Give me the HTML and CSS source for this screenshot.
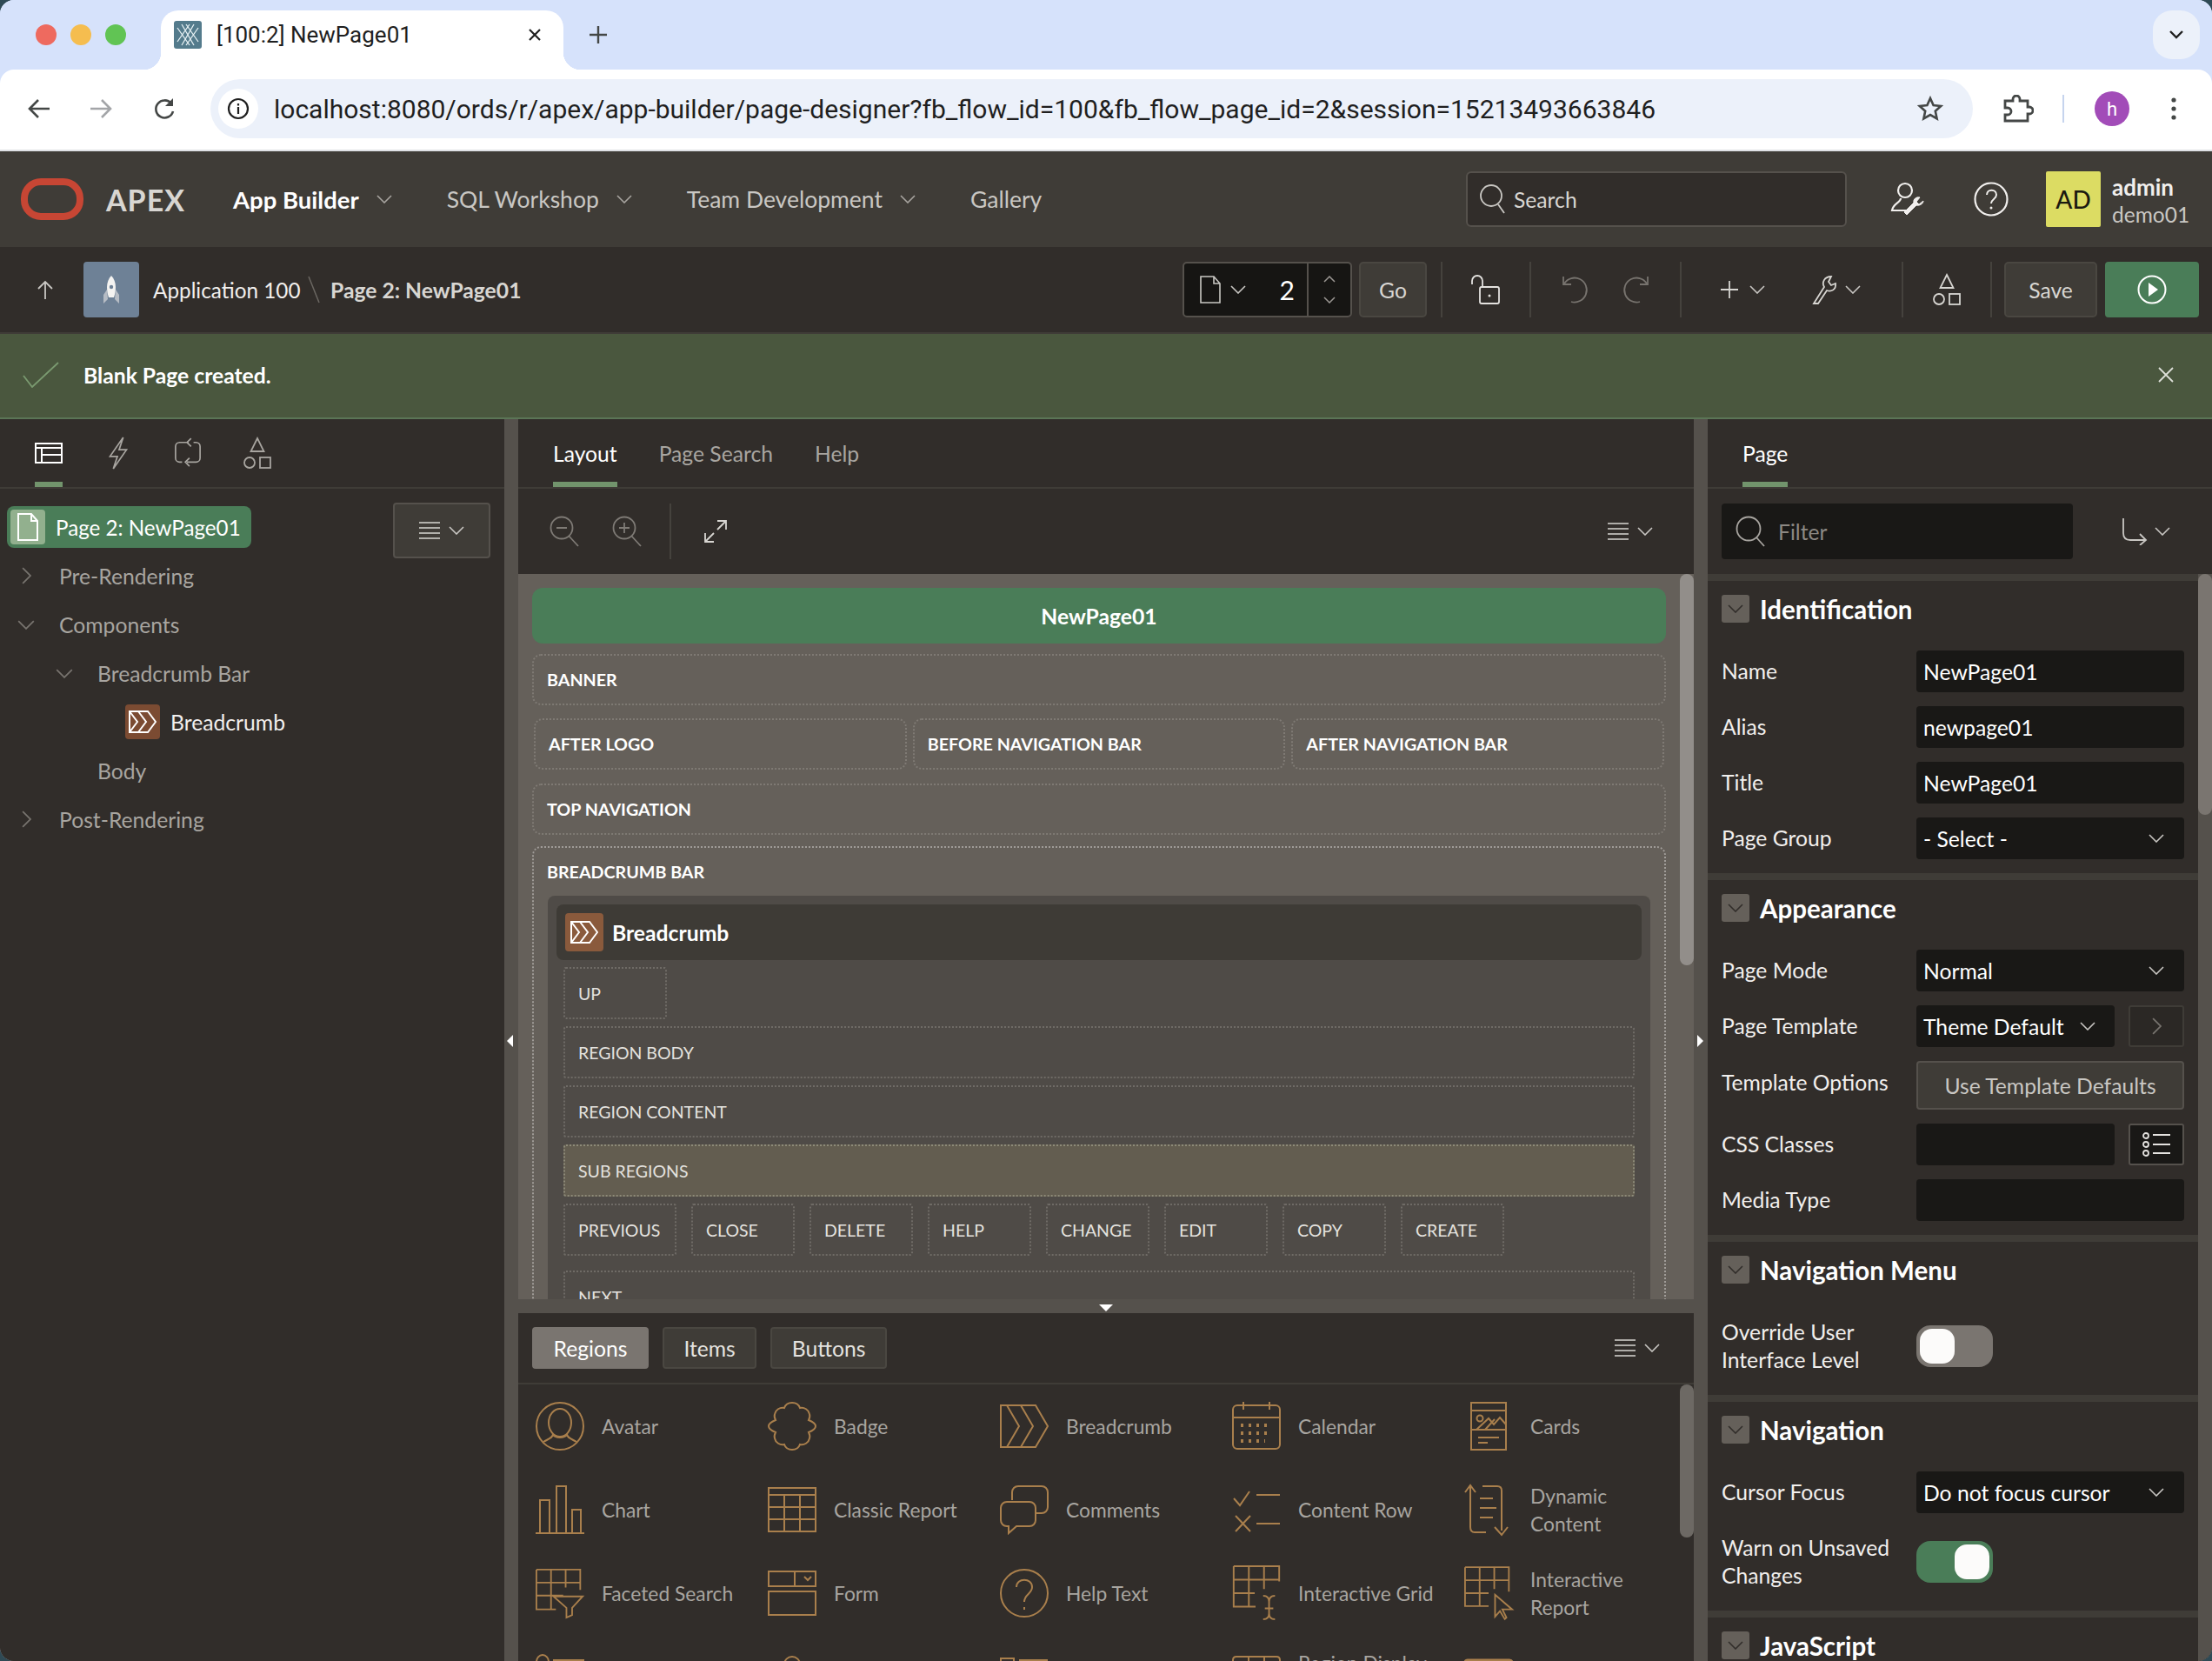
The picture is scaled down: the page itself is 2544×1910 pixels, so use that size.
FILE: index.html
```html
<!DOCTYPE html>
<html lang="en">
<head>
  <meta charset="UTF-8">
  <title>[100:2] NewPage01</title>
  <link rel="stylesheet" href="styles.css">
</head>
<body>
  <svg class="sprite" xmlns="http://www.w3.org/2000/svg">
    <symbol id="chev-down" viewBox="0 0 18 10"><path d="M1 1l8 8 8-8" fill="none" stroke="currentColor" stroke-width="1.6"/></symbol>
    <symbol id="chev-right" viewBox="0 0 10 18"><path d="M1 1l8 8-8 8" fill="none" stroke="currentColor" stroke-width="1.6"/></symbol>
    <symbol id="menu-lines" viewBox="0 0 24 20"><path d="M0 1h24M0 7h24M0 13h24M0 19h24" fill="none" stroke="currentColor" stroke-width="1.7"/></symbol>
    <symbol id="shapes" viewBox="0 0 32 38"><g fill="none" stroke="currentColor" stroke-width="1.8"><path d="M16 2l7.5 15h-15z"/><circle cx="7" cy="30" r="6"/><rect x="19" y="24" width="12" height="12"/></g></symbol>
    <symbol id="crumb-white" viewBox="0 0 32 28"><g fill="none" stroke="currentColor" stroke-width="2"><path d="M1 2h21l9 12-9 12H1z"/><path d="M1 2l9 12-9 12M11 2l9 12-9 12"/></g></symbol>
  </svg>

  <div class="window">
    <div class="tabstrip">
      <div class="lights"><i class="light red"></i><i class="light yellow"></i><i class="light green"></i></div>
      <div class="tab">
        <svg class="favicon" viewBox="0 0 32 32"><rect width="32" height="32" rx="3" fill="#547b8c"/><path d="M9 4l14 24M14 4l14 20M4 8l14 20M23 4L9 28M18 4L4 24M28 8L14 28" fill="none" stroke="#e6f0f3" stroke-width="1.3"/></svg>
        <span class="tab-title">[100:2] NewPage01</span>
        <svg class="tab-x" viewBox="0 0 14 14"><path d="M1 1l12 12M13 1L1 13" stroke="#1f1f1f" stroke-width="2.2"/></svg>
      </div>
      <svg class="tab-plus" viewBox="0 0 20 20"><path d="M10 0v20M0 10h20" stroke="#444746" stroke-width="2.4"/></svg>
      <div class="tab-search"><svg viewBox="0 0 16 10"><path d="M1 1l7 7 7-7" fill="none" stroke="#1f1f1f" stroke-width="2.4"/></svg></div>
    </div>

    <div class="browserbar">
      <svg class="nav-ico" viewBox="0 0 26 26"><path d="M25 13H3M12 3L2 13l10 10" fill="none" stroke="#444746" stroke-width="2.6"/></svg>
      <svg class="nav-ico forward" viewBox="0 0 26 26"><path d="M1 13h22M14 3l10 10-10 10" fill="none" stroke="#a3a5a8" stroke-width="2.6"/></svg>
      <svg class="nav-ico reload" viewBox="0 0 26 26"><path d="M21 7a10 10 0 1 0 2 9" fill="none" stroke="#444746" stroke-width="2.6"/><path d="M23 1v9h-9z" fill="#444746"/></svg>
      <div class="omnibox">
        <span class="site-info"><svg viewBox="0 0 26 26"><circle cx="13" cy="13" r="11" fill="none" stroke="#1f1f1f" stroke-width="2.2"/><path d="M13 11v8M13 7v2.4" stroke="#1f1f1f" stroke-width="2.2"/></svg></span>
        <span class="url">localhost:8080/ords/r/apex/app-builder/page-designer?fb_flow_id=100&amp;fb_flow_page_id=2&amp;session=15213493663846</span>
        <svg class="star" viewBox="0 0 30 30"><path d="M15 3l3.6 8 8.6 1-6.4 5.8 1.8 8.6L15 22l-7.6 4.4 1.8-8.6L2.800 12l8.600-1z" fill="none" stroke="#444746" stroke-width="2.6"/></svg>
      </div>
      <svg class="ext" viewBox="0 0 36 32"><path d="M3 7h9V5a4 4 0 0 1 8 0v2h9v7h2a4 4 0 0 1 0 8h-2v8H3v-7h3a4 4 0 0 0 0-8H3z" fill="none" stroke="#444746" stroke-width="2.8"/></svg>
      <i class="bar-sep"></i>
      <span class="profile">h</span>
      <svg class="kebab" viewBox="0 0 6 26"><circle cx="3" cy="3" r="2.600" fill="#444746"/><circle cx="3" cy="13" r="2.600" fill="#444746"/><circle cx="3" cy="23" r="2.600" fill="#444746"/></svg>
    </div>

    <header class="apex-head">
      <svg class="logo" viewBox="0 0 72 48"><rect x="4" y="4" width="64" height="40" rx="19" fill="none" stroke="#c74634" stroke-width="8"/></svg>
      <span class="apex-name">APEX</span>
      <nav class="topnav">
        <a class="topnav-item active">App Builder<svg><use href="#chev-down"/></svg></a>
        <a class="topnav-item">SQL Workshop<svg><use href="#chev-down"/></svg></a>
        <a class="topnav-item">Team Development<svg><use href="#chev-down"/></svg></a>
        <a class="topnav-item">Gallery</a>
      </nav>
      <div class="head-search">
        <svg viewBox="0 0 32 36"><circle cx="14" cy="14" r="12" fill="none" stroke="#c9c7c3" stroke-width="1.800"/><path d="M22 24l7 10" stroke="#c9c7c3" stroke-width="1.800"/></svg>
        <span>Search</span>
      </div>
      <svg class="head-ico" viewBox="0 0 40 40"><g fill="none" stroke="#f1efed" stroke-width="2.200"><circle cx="17" cy="10" r="8"/><path d="M12 19c0 5-9 6-10 14h19"/><path d="M38 22l-5 4-3-3 4-5c-4-1-8 2-7 6l-11 11 3 3 11-11c4 1 8-2 8-5z" fill="#f1efed" stroke-width="1"/></g></svg>
      <svg class="head-ico help" viewBox="0 0 40 40"><circle cx="20" cy="20" r="18.500" fill="none" stroke="#f1efed" stroke-width="2.200"/><path d="M15 15c0-7 11-7 11 0 0 5-6 5-6 10" fill="none" stroke="#f1efed" stroke-width="2"/><circle cx="20" cy="30" r="1.500" fill="#f1efed"/></svg>
      <div class="user-badge">AD</div>
      <div class="user-meta"><b>admin</b><span>demo01</span></div>
    </header>

    <div class="app-toolbar">
      <svg class="up-arrow" viewBox="0 0 20 22"><path d="M10 22V2M2 10l8-8 8 8" fill="none" stroke="#c9c7c3" stroke-width="1.800"/></svg>
      <span class="app-icon"><svg viewBox="0 0 24 34"><path d="M7 17l-4 6v10l5-5zM17 17l4 6v10l-5-5z" fill="#b6bcc4"/><path d="M12 1c3 3 5 8 5 13 0 5-1 9-2 12H9c-1-3-2-7-2-12 0-5 2-10 5-13z" fill="#f4f3f1"/><circle cx="12" cy="14" r="2.200" fill="#6e8196"/></svg></span>
      <span class="crumb-app">Application 100</span>
      <svg class="crumb-slash" viewBox="0 0 14 32"><path d="M1 1l12 30" stroke="#6b6762" stroke-width="1.500"/></svg>
      <span class="crumb-page">Page 2: NewPage01</span>

      <div class="page-picker">
        <div class="picker-main">
          <svg class="picker-doc" viewBox="0 0 24 32"><path d="M1 1h15l7 8v22H1zM16 1v8h7" fill="none" stroke="#c9c7c3" stroke-width="1.600"/></svg>
          <svg class="chev"><use href="#chev-down"/></svg>
          <span class="picker-num">2</span>
        </div>
        <div class="picker-spin">
          <svg viewBox="0 0 14 8"><path d="M1 7l6-6 6 6" fill="none" stroke="#9b9793" stroke-width="1.500"/></svg>
          <svg viewBox="0 0 14 8"><path d="M1 1l6 6 6-6" fill="none" stroke="#9b9793" stroke-width="1.500"/></svg>
        </div>
      </div>
      <div class="tool-btn go">Go</div>
      <i class="tool-sep first"></i>
      <svg class="tool-ico lock" viewBox="0 0 34 34"><path d="M2 11V7a6 6 0 0 1 12 0v7" fill="none" stroke="#e4e2df" stroke-width="1.800"/><rect x="11" y="14" width="22" height="19" rx="2" fill="none" stroke="#e4e2df" stroke-width="1.800"/><circle cx="22" cy="24" r="1.500" fill="#e4e2df"/></svg>
      <i class="tool-sep"></i>
      <svg class="tool-ico undo" viewBox="0 0 32 34"><path d="M4 10a14 14 0 1 1 8 21" fill="none" stroke="#77736e" stroke-width="1.800"/><path d="M3 2v9h9" fill="none" stroke="#77736e" stroke-width="1.800"/></svg>
      <svg class="tool-ico redo" viewBox="0 0 32 34"><path d="M28 10a14 14 0 1 0-8 21" fill="none" stroke="#77736e" stroke-width="1.800"/><path d="M29 2v9h-9" fill="none" stroke="#77736e" stroke-width="1.800"/></svg>
      <i class="tool-sep"></i>
      <svg class="tool-ico plus" viewBox="0 0 20 20"><path d="M10 0v20M0 10h20" stroke="#d8d6d2" stroke-width="1.800"/></svg>
      <svg class="chev"><use href="#chev-down"/></svg>
      <svg class="tool-ico wrench" viewBox="0 0 30 34"><path d="M3 33L15 14c-3-5 0-12 8-12l-3 6 3 4 5-2c1 7-5 10-10 8L8 33z" fill="none" stroke="#d8d6d2" stroke-width="1.800"/></svg>
      <svg class="chev"><use href="#chev-down"/></svg>
      <i class="tool-sep"></i>
      <svg class="tool-ico shapes-ico"><use href="#shapes"/></svg>
      <i class="tool-sep"></i>
      <div class="tool-btn save">Save</div>
      <div class="run-btn"><svg viewBox="0 0 34 34"><circle cx="17" cy="17" r="15.500" fill="none" stroke="#fff" stroke-width="2"/><path d="M13 9l11 8-11 8z" fill="#fff"/></svg></div>
    </div>

    <div class="success-bar">
      <svg class="success-check" viewBox="0 0 42 30"><path d="M1 16l10 13L41 1" fill="none" stroke="#7a9a70" stroke-width="1.800"/></svg>
      <b>Blank Page created.</b>
      <svg class="success-x" viewBox="0 0 18 18"><path d="M1 1l16 16M17 1L1 17" stroke="#dde0d8" stroke-width="1.800"/></svg>
    </div>

    <main class="designer">
      <section class="tree-panel">
        <div class="panel-tabs icons">
          <span class="icon-tab on"><svg viewBox="0 0 32 24"><rect x="1" y="1" width="30" height="22" fill="none" stroke="#fff" stroke-width="2"/><path d="M1 6h30M8 6v17M8 14h23" fill="none" stroke="#fff" stroke-width="2"/></svg></span>
          <span class="icon-tab"><svg viewBox="0 0 24 40"><path d="M18 1L2 24h9L6 39l16-23h-9z" fill="none" stroke="#a8a5a0" stroke-width="1.800"/></svg></span>
          <span class="icon-tab"><svg viewBox="0 0 34 40"><path d="M18 7H7a5 5 0 0 0-5 5v14a5 5 0 0 0 5 5h3M24 7h3a5 5 0 0 1 5 5v14a5 5 0 0 1-5 5H16M21 2l-5 5 5 5M19 26l-5 5 5 5" fill="none" stroke="#a8a5a0" stroke-width="1.800"/></svg></span>
          <span class="icon-tab"><svg><use href="#shapes"/></svg></span>
        </div>
        <div class="tree-top">
          <div class="tree-node root">
            <span class="doc-box"><svg viewBox="0 0 24 32"><path d="M1 1h15l7 8v22H1zM16 1v8h7" fill="none" stroke="#fff" stroke-width="2"/></svg></span>
            Page 2: NewPage01
          </div>
          <div class="menu-btn"><svg class="lines"><use href="#menu-lines"/></svg><svg class="chev"><use href="#chev-down"/></svg></div>
        </div>
        <ul class="tree">
          <li class="lvl0"><svg class="tw-r"><use href="#chev-right"/></svg>Pre-Rendering</li>
          <li class="lvl0"><svg class="tw-d"><use href="#chev-down"/></svg>Components</li>
          <li class="lvl1"><svg class="tw-d"><use href="#chev-down"/></svg>Breadcrumb Bar</li>
          <li class="lvl2"><span class="crumb-box"><svg><use href="#crumb-white"/></svg></span>Breadcrumb</li>
          <li class="lvl1 leaf">Body</li>
          <li class="lvl0"><svg class="tw-r"><use href="#chev-right"/></svg>Post-Rendering</li>
        </ul>
      </section>

      <div class="gutter"><i class="arrow-left"></i></div>

      <section class="center-panel">
        <div class="panel-tabs text-tabs">
          <span class="text-tab on">Layout</span>
          <span class="text-tab">Page Search</span>
          <span class="text-tab">Help</span>
        </div>
        <div class="canvas-tools">
          <svg class="zoom-ico" viewBox="0 0 34 36"><circle cx="14" cy="14" r="12.500" fill="none" stroke="#7e7a75" stroke-width="1.800"/><path d="M22 23l11 12M8 14h12" stroke="#7e7a75" stroke-width="1.800"/></svg>
          <svg class="zoom-ico" viewBox="0 0 34 36"><circle cx="14" cy="14" r="12.500" fill="none" stroke="#7e7a75" stroke-width="1.800"/><path d="M22 23l11 12M8 14h12M14 8v12" stroke="#7e7a75" stroke-width="1.800"/></svg>
          <i class="tools-sep"></i>
          <svg class="expand-ico" viewBox="0 0 28 28"><path d="M16 2h10v10M26 2L16 12M2 16v10h10M2 26l10-10" fill="none" stroke="#d8d6d2" stroke-width="1.800"/></svg>
          <span class="spacer"></span>
          <svg class="lines"><use href="#menu-lines"/></svg>
          <svg class="chev"><use href="#chev-down"/></svg>
        </div>
        <div class="canvas">
          <div class="canvas-inner">
            <div class="page-title">NewPage01</div>
            <div class="slot wide">BANNER</div>
            <div class="slot-row">
              <div class="slot">AFTER LOGO</div>
              <div class="slot">BEFORE NAVIGATION BAR</div>
              <div class="slot">AFTER NAVIGATION BAR</div>
            </div>
            <div class="slot wide">TOP NAVIGATION</div>
            <div class="slot bar">
              <div class="bar-label">BREADCRUMB BAR</div>
              <div class="region">
                <div class="region-head">
                  <span class="crumb-box"><svg><use href="#crumb-white"/></svg></span>
                  <b>Breadcrumb</b>
                </div>
                <div class="sub-slot small">UP</div>
                <div class="sub-slot">REGION BODY</div>
                <div class="sub-slot">REGION CONTENT</div>
                <div class="sub-slot marked">SUB REGIONS</div>
                <div class="sub-row">
                  <div class="sub-slot first">PREVIOUS</div>
                  <div class="sub-slot">CLOSE</div>
                  <div class="sub-slot">DELETE</div>
                  <div class="sub-slot">HELP</div>
                  <div class="sub-slot">CHANGE</div>
                  <div class="sub-slot">EDIT</div>
                  <div class="sub-slot">COPY</div>
                  <div class="sub-slot">CREATE</div>
                </div>
                <div class="sub-slot">NEXT</div>
              </div>
            </div>
          </div>
          <i class="canvas-scroll"></i>
        </div>
        <div class="hsplit"><i class="arrow-down"></i></div>
        <div class="gallery">
          <div class="gallery-tabs">
            <span class="gal-tab on">Regions</span>
            <span class="gal-tab">Items</span>
            <span class="gal-tab">Buttons</span>
            <span class="spacer"></span>
            <svg class="lines"><use href="#menu-lines"/></svg>
            <svg class="chev"><use href="#chev-down"/></svg>
          </div>
          <div class="gal-grid">
            <div class="gal-item"><svg viewBox="0 0 56 56"><g class="gi"><circle cx="28" cy="28" r="27"/><ellipse cx="28" cy="24" rx="13" ry="16"/><path d="M20 37c0 4-4 5-11 9M36 37c0 4 4 5 11 9M20 38c3 4 13 4 16 0"/></g></svg><span>Avatar</span></div>
            <div class="gal-item"><svg viewBox="0 0 56 56"><g class="gi"><path d="M28 1c5 0 8 3 9 6 5-1 10 2 11 7 1 3 0 5-1 7 5 2 8 4 8 7s-3 5-8 7c1 2 2 4 1 7-1 5-6 8-11 7-1 3-4 6-9 6s-8-3-9-6c-5 1-10-2-11-7-1-3 0-5 1-7-5-2-8-4-8-7s3-5 8-7c-1-2-2-4-1-7 1-5 6-8 11-7 1-3 4-6 9-6z"/></g></svg><span>Badge</span></div>
            <div class="gal-item"><svg viewBox="0 0 56 50"><g class="gi"><path d="M1 1h40l14 24-14 24H1z"/><path d="M8 1l14 24L8 49M24 1l14 24-14 24"/></g></svg><span>Breadcrumb</span></div>
            <div class="gal-item"><svg viewBox="0 0 56 64"><g class="gi"><rect x="1" y="8" width="54" height="50" rx="5"/><path d="M1 22h54M13 4v9M43 4v9"/><path class="dots" d="M10 31h36M10 40h36M10 49h28"/></g></svg><span>Calendar</span></div>
            <div class="gal-item"><svg viewBox="0 0 56 64"><g class="gi"><rect x="8" y="5" width="40" height="54"/><path d="M8 14h40M8 36h40M16 45h24M16 51h11M14 36l14-13 6 7 7-8 7 8M24 36l11-12"/><circle cx="18" cy="23" r="3.500"/></g></svg><span>Cards</span></div>

            <div class="gal-item"><svg viewBox="0 0 56 56"><g class="gi"><path d="M0 55h56M5 54V17h11v37M24 54V1h11v53M42 54V28h10v26"/></g></svg><span>Chart</span></div>
            <div class="gal-item"><svg viewBox="0 0 56 52"><g class="gi"><rect x="1" y="1" width="54" height="50"/><path d="M1 9h54M1 23h54M1 37h54M19 9v42M37 9v42"/></g></svg><span>Classic Report</span></div>
            <div class="gal-item"><svg viewBox="0 0 56 56"><g class="gi"><path d="M14 17V8c0-4 3-7 7-7h27c4 0 7 3 7 7v17c0 4-3 7-7 7h-7"/><path d="M8 19h26c4 0 7 3 7 7v14c0 4-3 7-7 7H19l-9 8v-8H8c-4 0-7-3-7-7V26c0-4 3-7 7-7z"/></g></svg><span>Comments</span></div>
            <div class="gal-item"><svg viewBox="0 0 56 56"><g class="gi"><path d="M2 15l7 8L20 7M28 11h27M28 44h27M4 35l17 18M21 35L4 53"/></g></svg><span>Content Row</span></div>
            <div class="gal-item"><svg viewBox="0 0 56 60"><g class="gi"><path d="M1 10L7 2l6 8M7 2v48c0 4 2 6 5 6h13M21 3h17c4 0 5 2 5 5v46M35 50l8 9 7-9M18 17h15M18 28h19M18 39h15"/></g></svg><span>Dynamic<br>Content</span></div>

            <div class="gal-item"><svg viewBox="0 0 60 60"><g class="gi"><path d="M1 1h54v25M1 1v49h24M1 17h54M1 33h33M19 1v49M37 1v22"/><path d="M22 34h36L45 48v9l-7 3V48z"/></g></svg><span>Faceted Search</span></div>
            <div class="gal-item"><svg viewBox="0 0 56 52"><g class="gi"><rect x="1" y="1" width="54" height="17"/><path d="M31 1v17M42 7l4 4 4-4"/><rect x="1" y="24" width="54" height="27"/></g></svg><span>Form</span></div>
            <div class="gal-item"><svg viewBox="0 0 56 56"><g class="gi"><circle cx="28" cy="28" r="27"/><path d="M19 21c0-11 18-11 18 0 0 8-9 8-9 17"/><path d="M28 44v3"/></g></svg><span>Help Text</span></div>
            <div class="gal-item"><svg viewBox="0 0 56 66"><g class="gi"><path d="M1 1h54v18M1 1v48h26M1 17h54M1 33h25M19 1v48M37 1v27"/><path d="M36 36c5 0 7 3 7 7v14c0 4 2 7 7 7M50 36c-5 0-7 3-7 7v14c0 4-2 7-7 7M38 51h10"/></g></svg><span>Interactive Grid</span></div>
            <div class="gal-item"><svg viewBox="0 0 60 66"><g class="gi"><path d="M1 1h54v30M1 1v48h29M1 17h54M1 33h29M19 1v48M37 1v27"/><path d="M38 35v27l6-7 6 10 2-2-5-10h12z"/></g></svg><span>Interactive<br>Report</span></div>

            <div class="gal-item"><svg viewBox="0 0 56 64"><g class="gi"><ellipse cx="8" cy="15" rx="7" ry="8"/><path d="M20 13h36"/></g></svg></div>
            <div class="gal-item"><svg viewBox="0 0 56 64"><g class="gi"><circle cx="28" cy="18" r="9"/></g></svg></div>
            <div class="gal-item"><svg viewBox="0 0 56 64"><g class="gi"><rect x="1" y="11" width="15" height="14"/><path d="M22 13h33"/></g></svg></div>
            <div class="gal-item"><svg viewBox="0 0 56 64"><g class="gi"><path d="M1 22v-9c0-3 1-4 4-4h46c3 0 4 1 4 4v9M1 15h54M19 9v13M37 9v13"/></g></svg><span>Region Display Selector</span></div>
            <div class="gal-item"><svg viewBox="0 0 56 64"><g class="gi"><path d="M1 18v-2c0-2 1-3 3-3h48c2 0 3 1 3 3v2" stroke-width="3"/></g></svg></div>
          </div>
          <i class="gal-scroll"></i>
        </div>
      </section>

      <div class="gutter"><i class="arrow-right"></i></div>

      <section class="props-panel">
        <div class="panel-tabs text-tabs"><span class="text-tab on">Page</span></div>
        <div class="filter-row">
          <div class="filter-input">
            <svg viewBox="0 0 34 36"><circle cx="15" cy="15" r="13.500" fill="none" stroke="#a8a5a0" stroke-width="1.800"/><path d="M24 25l9 10" stroke="#a8a5a0" stroke-width="1.800"/></svg>
            <span>Filter</span>
          </div>
          <svg class="go-ico" viewBox="0 0 30 32"><path d="M2 1v17c0 5 3 8 8 8h18M21 19l7 7-7 6" fill="none" stroke="#c9c7c3" stroke-width="1.800"/></svg>
          <svg class="chev"><use href="#chev-down"/></svg>
        </div>
        <div class="props-scroll">
          <div class="prop-group">
            <h3 class="group-head"><span class="collapse"><svg><use href="#chev-down"/></svg></span>Identification</h3>
            <div class="prop-row"><label>Name</label><div class="field">NewPage01</div></div>
            <div class="prop-row"><label>Alias</label><div class="field">newpage01</div></div>
            <div class="prop-row"><label>Title</label><div class="field">NewPage01</div></div>
            <div class="prop-row"><label>Page Group</label><div class="field select">- Select -<svg><use href="#chev-down"/></svg></div></div>
          </div>
          <div class="prop-group">
            <h3 class="group-head"><span class="collapse"><svg><use href="#chev-down"/></svg></span>Appearance</h3>
            <div class="prop-row"><label>Page Mode</label><div class="field select">Normal<svg><use href="#chev-down"/></svg></div></div>
            <div class="prop-row"><label>Page Template</label><div class="field select short">Theme Default<svg><use href="#chev-down"/></svg></div><div class="side-btn muted"><svg><use href="#chev-right"/></svg></div></div>
            <div class="prop-row tall"><label>Template Options</label><div class="field-btn">Use Template Defaults</div></div>
            <div class="prop-row"><label>CSS Classes</label><div class="field short"></div><div class="side-btn"><svg class="list-ico" viewBox="0 0 32 28"><g fill="none" stroke="#e4e2df" stroke-width="1.800"><circle cx="4" cy="4" r="3"/><circle cx="4" cy="14" r="3"/><circle cx="4" cy="24" r="3"/><path d="M12 3h20M12 14h20M12 24h20"/></g></svg></div></div>
            <div class="prop-row"><label>Media Type</label><div class="field"></div></div>
          </div>
          <div class="prop-group">
            <h3 class="group-head"><span class="collapse"><svg><use href="#chev-down"/></svg></span>Navigation Menu</h3>
            <div class="prop-row two-line"><label>Override User Interface Level</label><span class="toggle"></span></div>
          </div>
          <div class="prop-group">
            <h3 class="group-head"><span class="collapse"><svg><use href="#chev-down"/></svg></span>Navigation</h3>
            <div class="prop-row"><label>Cursor Focus</label><div class="field select">Do not focus cursor<svg><use href="#chev-down"/></svg></div></div>
            <div class="prop-row two-line"><label>Warn on Unsaved Changes</label><span class="toggle on"></span></div>
          </div>
          <div class="prop-group">
            <h3 class="group-head"><span class="collapse"><svg><use href="#chev-down"/></svg></span>JavaScript</h3>
          </div>
          <i class="props-thumb"></i>
        </div>
      </section>
    </main>
  </div>
</body>
</html>
```
FILE: styles.css
```css
* {
  box-sizing: border-box;
}

html, body {
  margin: 0;
  width: 2544px;
  height: 1910px;
  overflow: hidden;
  background: #2f4a55;
}

body {
  font-family: Lato, "Noto Sans", sans-serif;
  font-size: 24.7px;
  color: #f1efed;
}

.sprite {
  display: none;
}

.window {
  width: 2544px;
  height: 1910px;
  overflow: hidden;
  border-radius: 16px;
  background: #d6e2fb;
}

.spacer {
  flex: 1;
}

.chev {
  width: 18px;
  height: 10px;
  color: #c9c7c3;
  flex: none;
}

.lines {
  width: 24px;
  height: 20px;
  color: #d8d6d2;
  flex: none;
}

/* browser chrome */
.tabstrip {
  height: 80px;
  display: flex;
  align-items: flex-start;
  background: #d6e2fb;
}

.lights {
  display: flex;
  gap: 16px;
  padding: 28px 0 0 41px;
  width: 185px;
}

.light {
  width: 24px;
  height: 24px;
  border-radius: 50%;
}

.light.red { background: #ee6a5f; }
.light.yellow { background: #f5bd4f; }
.light.green { background: #61c454; }

.tab {
  position: relative;
  width: 463px;
  height: 68px;
  margin-top: 12px;
  padding: 0 26px 12px 15px;
  display: flex;
  align-items: center;
  background: #fff;
  border-radius: 20px 20px 0 0;
  font-family: Roboto, sans-serif;
  font-size: 26px;
  color: #1f1f1f;
}

.tab::before, .tab::after {
  content: "";
  position: absolute;
  bottom: 0;
  width: 20px;
  height: 20px;
}

.tab::before {
  left: -20px;
  background: radial-gradient(circle at 0 0, #d6e2fb 20px, #fff 20.500px);
}

.tab::after {
  right: -20px;
  background: radial-gradient(circle at 100% 0, #d6e2fb 20px, #fff 20.500px);
}

.favicon {
  width: 32px;
  height: 32px;
  flex: none;
}

.tab-title {
  margin-left: 17px;
  flex: 1;
}

.tab-x {
  width: 14px;
  height: 14px;
}

.tab-plus {
  width: 20px;
  height: 20px;
  margin: 30px 0 0 30px;
}

.tab-search {
  margin: 12px 14px 0 auto;
  width: 54px;
  height: 56px;
  border-radius: 22px;
  background: #ecf1fa;
  display: flex;
  align-items: center;
  justify-content: center;
}

.tab-search svg {
  width: 16px;
  height: 10px;
}

.browserbar {
  height: 94px;
  display: flex;
  align-items: center;
  padding: 0 0 2px 32px;
  background: #fff;
  border-bottom: 2px solid #dfe1e5;
  border-radius: 16px 16px 0 0;
}

.nav-ico {
  width: 26px;
  height: 26px;
  flex: none;
}

.nav-ico.forward {
  margin-left: 45px;
}

.nav-ico.reload {
  margin-left: 47px;
}

.omnibox {
  margin-left: 40px;
  width: 2027px;
  height: 68px;
  border-radius: 34px;
  background: #ecf1fa;
  display: flex;
  align-items: center;
  padding: 0 34px 0 9px;
}

.site-info {
  width: 46px;
  height: 46px;
  border-radius: 50%;
  background: #fff;
  display: flex;
  align-items: center;
  justify-content: center;
}

.site-info svg {
  width: 26px;
  height: 26px;
}

.url {
  margin-left: 18px;
  font-family: Roboto, sans-serif;
  font-size: 30px;
  color: #1f1f1f;
  white-space: nowrap;
  flex: 1;
}

.star {
  width: 30px;
  height: 30px;
}

.ext {
  width: 36px;
  height: 32px;
  margin-left: 34px;
  flex: none;
}

.bar-sep {
  width: 2px;
  height: 32px;
  background: #c6d4ee;
  margin-left: 33px;
}

.profile {
  width: 40px;
  height: 40px;
  margin-left: 35px;
  border-radius: 50%;
  background: #a24cb8;
  color: #fff;
  font-family: Roboto, sans-serif;
  font-size: 22px;
  display: flex;
  align-items: center;
  justify-content: center;
}

.kebab {
  width: 6px;
  height: 26px;
  margin-left: 48px;
}

/* apex header */
.apex-head {
  height: 110px;
  background: #3f3c37;
  display: flex;
  align-items: center;
  padding-left: 24px;
}

.logo {
  width: 72px;
  height: 48px;
  flex: none;
}

.apex-name {
  margin-left: 26px;
  width: 146px;
  font-size: 34px;
  font-weight: 700;
  letter-spacing: 1px;
  color: #d8d6d2;
}

.topnav {
  display: flex;
  color: #c9c7c3;
  font-size: 26.500px;
}

.topnav-item {
  display: flex;
  align-items: center;
  gap: 20px;
  margin-right: 63px;
  white-space: nowrap;
}

.topnav-item svg {
  width: 18px;
  height: 10px;
  color: #a8a5a0;
}

.topnav-item.active {
  color: #fff;
  font-size: 27.500px;
  font-weight: 700;
}

.head-search {
  width: 438px;
  height: 64px;
  margin-left: auto;
  background: #312d2a;
  border: 2px solid #55514c;
  border-radius: 6px;
  display: flex;
  align-items: center;
  gap: 8px;
  padding-left: 13px;
  color: #d8d6d2;
  flex: none;
}

.head-search svg {
  width: 32px;
  height: 36px;
}

.head-ico {
  width: 40px;
  height: 40px;
  margin-left: 50px;
  flex: none;
}

.head-ico.help {
  margin-left: 56px;
}

.user-badge {
  width: 63px;
  height: 64px;
  margin-left: 43px;
  background: #dcdc63;
  color: #1b1a10;
  font-size: 28px;
  font-weight: 500;
  border-radius: 2px;
  display: flex;
  align-items: center;
  justify-content: center;
  flex: none;
}

.user-meta {
  width: 115px;
  margin: 4px 0 0 13px;
  display: flex;
  flex-direction: column;
  line-height: 31px;
  font-size: 26px;
  flex: none;
}

.user-meta span {
  font-size: 24.500px;
  color: #c9c7c3;
}

/* app toolbar */
.app-toolbar {
  height: 100px;
  background: #312d2a;
  display: flex;
  align-items: center;
  padding-left: 42px;
  border-bottom: 2px solid #3f3c37;
}

.up-arrow {
  width: 20px;
  height: 22px;
  flex: none;
}

.app-icon {
  width: 64px;
  height: 64px;
  margin-left: 34px;
  background: #6e8196;
  border-radius: 4px;
  display: flex;
  align-items: center;
  justify-content: center;
  flex: none;
}

.app-icon svg {
  width: 24px;
  height: 34px;
}

.crumb-app {
  margin-left: 16px;
  white-space: nowrap;
  width: 172px;
  font-size: 24.300px;
}

.crumb-slash {
  width: 14px;
  height: 32px;
  margin-left: 6px;
  flex: none;
}

.crumb-page {
  margin-left: 12px;
  font-weight: 700;
  color: #d8d6d2;
  white-space: nowrap;
  width: 980px;
}

.page-picker {
  width: 195px;
  height: 64px;
  background: #161513;
  border: 2px solid #55514c;
  border-radius: 5px;
  display: flex;
  flex: none;
}

.picker-main {
  flex: 1;
  display: flex;
  align-items: center;
  padding-left: 18px;
  border-right: 2px solid #55514c;
}

.picker-doc {
  width: 24px;
  height: 32px;
}

.picker-main .chev {
  margin-left: 11px;
}

.picker-num {
  margin-left: auto;
  margin-right: 14px;
  font-size: 30px;
  color: #fff;
}

.picker-spin {
  width: 48px;
  display: flex;
  flex-direction: column;
  align-items: center;
  justify-content: space-around;
  padding: 6px 0;
}

.picker-spin svg {
  width: 14px;
  height: 8px;
}

.tool-btn {
  height: 64px;
  background: #3f3c37;
  border: 2px solid #4a4741;
  border-radius: 5px;
  display: flex;
  align-items: center;
  justify-content: center;
  color: #d8d6d2;
  flex: none;
}

.tool-btn.go {
  width: 78px;
  margin-left: 8px;
}

.tool-sep {
  width: 2px;
  height: 64px;
  background: #45423d;
  margin: 0 34px;
  flex: none;
}

.tool-sep.first {
  margin: 0 32px 0 16px;
}

.tool-ico {
  flex: none;
}

.tool-ico.lock {
  width: 34px;
  height: 34px;
}

.tool-ico.undo, .tool-ico.redo {
  width: 32px;
  height: 34px;
}

.tool-ico.redo {
  margin-left: 39px;
}

.tool-ico.plus {
  width: 20px;
  height: 20px;
  margin-left: 11px;
}

.tool-ico.plus + .chev {
  margin-left: 13px;
}

.tool-ico.wrench {
  width: 30px;
  height: 34px;
  margin-left: 53px;
}

.tool-ico.wrench + .chev {
  margin: 0 13px 0 9px;
}

.tool-ico.shapes-ico {
  width: 32px;
  height: 38px;
  color: #d8d6d2;
}

.tool-btn.save {
  width: 107px;
  margin-left: -20px;
}

.run-btn {
  width: 108px;
  height: 64px;
  margin-left: 9px;
  background: #4a7d58;
  border-radius: 4px;
  display: flex;
  align-items: center;
  justify-content: center;
  flex: none;
}

.run-btn svg {
  width: 34px;
  height: 34px;
}

/* success */
.success-bar {
  height: 98px;
  background: #4a573e;
  border-bottom: 2px solid #5b7556;
  display: flex;
  align-items: center;
  padding: 0 44px 2px 26px;
  color: #fff;
}

.success-check {
  width: 42px;
  height: 30px;
  margin-right: 28px;
}

.success-x {
  width: 18px;
  height: 18px;
  margin-left: auto;
}

/* panels */
.designer {
  height: 1428px;
  display: flex;
  background: #55514c;
}

.gutter {
  position: relative;
  width: 16px;
  flex: none;
  background: #55514c;
}

.arrow-left, .arrow-right, .arrow-down {
  position: absolute;
  width: 0;
  height: 0;
  border-style: solid;
  border-color: transparent;
}

.arrow-left {
  left: 3px;
  top: 708px;
  border-width: 7px 7px 7px 0;
  border-right-color: #fff;
}

.arrow-right {
  left: 4px;
  top: 708px;
  border-width: 7px 0 7px 7px;
  border-left-color: #fff;
}

.arrow-down {
  left: 668px;
  top: 6px;
  border-width: 8px 8px 0;
  border-top-color: #fff;
}

.tree-panel, .props-panel {
  width: 580px;
  background: #312d2a;
  flex: none;
}

.panel-tabs {
  height: 80px;
  flex: none;
  background: #312d2a;
  border-bottom: 2px solid #3f3c37;
  display: flex;
}

.panel-tabs.icons {
  padding-left: 40px;
  gap: 48px;
}

.icon-tab {
  width: 32px;
  height: 78px;
  display: flex;
  align-items: center;
  justify-content: center;
}

.icon-tab svg {
  width: 32px;
  height: 38px;
  color: #a8a5a0;
}

.icon-tab.on {
  box-shadow: inset 0 -6px 0 #72946c;
}

.tree-top {
  display: flex;
  align-items: flex-start;
  justify-content: space-between;
  padding: 16px 16px 0 8px;
}

.tree-node.root {
  width: 281px;
  height: 48px;
  margin-top: 4px;
  background: #4a7d58;
  border-radius: 8px;
  display: flex;
  align-items: center;
  gap: 12px;
  padding-left: 4px;
  color: #fff;
  font-size: 24.200px;
  white-space: nowrap;
}

.doc-box {
  width: 40px;
  height: 40px;
  background: #92b08e;
  border-radius: 4px;
  display: flex;
  align-items: center;
  justify-content: center;
}

.doc-box svg {
  width: 24px;
  height: 32px;
}

.menu-btn {
  width: 112px;
  height: 64px;
  background: #3f3c37;
  border: 2px solid #55514c;
  border-radius: 4px;
  display: flex;
  align-items: center;
  justify-content: center;
  gap: 10px;
}

.tree {
  list-style: none;
  margin: -8px 0 0;
  padding: 0;
  color: #a8a5a0;
}

.tree li {
  height: 56px;
  display: flex;
  align-items: center;
  white-space: nowrap;
}

.tree svg {
  flex: none;
  color: #77736e;
}

.tw-r {
  width: 11px;
  height: 20px;
}

.tw-d {
  width: 20px;
  height: 11px;
}

.tree .lvl0 {
  padding-left: 20px;
}

.lvl0 .tw-r {
  margin: 0 32px 0 5px;
}

.lvl0 .tw-d {
  margin-right: 28px;
}

.tree .lvl1 {
  padding-left: 64px;
}

.lvl1 .tw-d {
  margin-right: 28px;
}

.tree .lvl1.leaf {
  padding-left: 112px;
}

.tree .lvl2 {
  padding-left: 144px;
  color: #f1efed;
  gap: 12px;
}

.crumb-box {
  width: 40px;
  height: 40px;
  background: #7b4b32;
  border-radius: 4px;
  display: flex;
  align-items: center;
  justify-content: center;
  flex: none;
}

.crumb-box svg {
  width: 32px;
  height: 28px;
  color: #fff;
}

/* center */
.center-panel {
  width: 1352px;
  flex: none;
  display: flex;
  flex-direction: column;
}

.text-tabs {
  padding-left: 40px;
  gap: 48px;
}

.text-tab {
  height: 78px;
  line-height: 80px;
  color: #a8a5a0;
  white-space: nowrap;
}

.text-tab.on {
  color: #fff;
  box-shadow: inset 0 -6px 0 #72946c;
}

.canvas-tools {
  height: 98px;
  flex: none;
  background: #312d2a;
  display: flex;
  align-items: center;
  padding: 0 47px 0 36px;
}

.zoom-ico {
  width: 34px;
  height: 36px;
  margin-right: 38px;
}

.tools-sep {
  width: 2px;
  height: 64px;
  background: #45423d;
  margin-left: -6px;
}

.expand-ico {
  width: 28px;
  height: 28px;
  margin-left: 37px;
}

.canvas-tools .chev {
  margin-left: 10px;
}

.canvas {
  position: relative;
  height: 834px;
  flex: none;
  overflow: hidden;
  background: #65605a;
}

.canvas-inner {
  padding: 16px 32px 0 16px;
}

.page-title {
  height: 64px;
  background: #4a7d58;
  border-radius: 12px;
  font-weight: 700;
  color: #fff;
  display: flex;
  align-items: center;
  justify-content: center;
}

.slot, .sub-slot {
  border: 2px dotted #7f7a74;
  font-size: 19.700px;
  white-space: nowrap;
}

.slot {
  border-radius: 10px;
  font-weight: 700;
  color: #fff;
  display: flex;
  align-items: center;
  padding-left: 15px;
  height: 59px;
}

.slot.wide {
  margin-top: 12px;
}

.slot-row {
  display: flex;
  gap: 7px;
  margin: 15px 2px 16px;
}

.slot-row .slot {
  flex: 1;
}

.slot.bar {
  display: block;
  height: 900px;
  margin-top: 13px;
  padding: 0 0 0 16px;
  border-color: #a09c98;
}

.bar-label {
  height: 55px;
  line-height: 55px;
  margin-left: -1px;
}

.region {
  margin-right: 16px;
  background: #4f4b47;
  border-radius: 8px 8px 0 0;
  padding: 10px 10px 0;
  font-weight: 400;
  color: #e4e2df;
}

.region-head {
  height: 64px;
  background: #3e3b36;
  border-radius: 8px;
  margin-bottom: 8px;
  display: flex;
  align-items: center;
  padding-left: 10px;
  gap: 10px;
  font-size: 24.700px;
}

.region-head .crumb-box {
  width: 44px;
  height: 44px;
  background: #8a5a3c;
}

.region-head b {
  color: #fff;
}

.sub-slot {
  height: 60px;
  margin: 0 8px 8px;
  padding-left: 15px;
  display: flex;
  align-items: center;
  border-radius: 3px;
  border-color: #6f6b66;
  font-size: 19.500px;
}

.sub-slot.small {
  width: 119px;
}

.sub-slot.marked {
  background: #635d50;
  border-color: #8d8a78;
}

.sub-row {
  display: flex;
  margin-left: 8px;
}

.sub-row .sub-slot {
  width: 119px;
  margin: 0 17px 0 0;
  flex: none;
}

.sub-row .sub-slot.first {
  width: 130px;
}

.sub-row + .sub-slot {
  margin-top: 17px;
}

.canvas-scroll {
  position: absolute;
  right: 0;
  top: 0;
  width: 16px;
  height: 450px;
  border-radius: 8px;
  background: #928e8a;
}

.hsplit {
  position: relative;
  height: 16px;
  flex: none;
  background: #55514c;
}

.gallery {
  position: relative;
  flex: 1;
  overflow: hidden;
  background: #312d2a;
}

.gallery-tabs {
  height: 82px;
  padding: 16px 39px 16px 16px;
  display: flex;
  align-items: center;
  gap: 16px;
  border-bottom: 2px solid #3f3c37;
}

.gallery-tabs .chev {
  margin-left: -6px;
}

.gal-tab {
  height: 48px;
  padding: 0 22.500px;
  display: flex;
  align-items: center;
  background: #3f3c37;
  border: 2px solid #4a4741;
  border-radius: 4px;
  color: #e4e2df;
}

.gal-tab.on {
  background: #7a7570;
  border-color: #7a7570;
  color: #fff;
}

.gal-grid {
  display: grid;
  grid-template-columns: repeat(5, 267px);
  grid-auto-rows: 96px;
  padding: 0 0 0 20px;
  height: 400px;
}

.gal-item {
  display: flex;
  align-items: center;
  gap: 20px;
  font-size: 22.800px;
  line-height: 32px;
  color: #a8a5a0;
  padding-right: 12px;
}

.gal-item svg {
  width: 56px;
  height: 64px;
  flex: none;
  overflow: visible;
}

.gi {
  fill: none;
  stroke: #a97f4c;
  stroke-width: 2;
}

.gi .dots {
  stroke-dasharray: 3 6;
  stroke-width: 4;
}

.gal-scroll {
  position: absolute;
  right: 0;
  top: 82px;
  width: 16px;
  height: 176px;
  border-radius: 8px;
  background: #6d6964;
}

/* properties */
.filter-row {
  height: 98px;
  display: flex;
  align-items: center;
  padding-left: 16px;
}

.filter-input {
  width: 404px;
  height: 64px;
  background: #191816;
  border-radius: 4px;
  display: flex;
  align-items: center;
  gap: 15px;
  padding-left: 16px;
  color: #8c8883;
  margin-right: 56px;
}

.filter-input svg {
  width: 34px;
  height: 36px;
}

.go-ico {
  width: 30px;
  height: 32px;
}

.filter-row .chev {
  margin-left: 8px;
}

.props-scroll {
  position: relative;
  height: 1250px;
  padding-right: 16px;
  background: #55514c;
}

.prop-group {
  background: #312d2a;
  border-top: 8px solid #3f3c37;
  padding: 16px;
}

.group-head {
  height: 32px;
  margin: 0 0 32px;
  display: flex;
  align-items: center;
  gap: 12px;
  font-size: 29.500px;
  font-weight: 700;
  color: #fff;
  white-space: nowrap;
}

.collapse {
  width: 32px;
  height: 32px;
  background: #65605a;
  border-radius: 3px;
  display: flex;
  align-items: center;
  justify-content: center;
}

.collapse svg {
  width: 18px;
  height: 10px;
  color: #312d2a;
}

.prop-row {
  display: flex;
  align-items: center;
  min-height: 48px;
  margin-bottom: 16px;
  color: #f1efed;
}

.prop-row:last-child {
  margin-bottom: 0;
}

.prop-row label {
  width: 224px;
  flex: none;
  line-height: 32px;
}

.field {
  width: 308px;
  height: 48px;
  background: #191816;
  border-radius: 4px;
  padding-left: 8px;
  display: flex;
  align-items: center;
  justify-content: space-between;
  color: #fff;
  white-space: nowrap;
}

.field.short {
  width: 228px;
}

.field svg {
  width: 18px;
  height: 10px;
  margin-right: 23px;
  color: #c9c7c3;
}

.field.short svg {
  margin-right: 22px;
}

.side-btn {
  width: 64px;
  height: 48px;
  margin-left: 16px;
  background: #191816;
  border: 2px solid #55514c;
  border-radius: 3px;
  display: flex;
  align-items: center;
  justify-content: center;
}

.side-btn.muted {
  background: #2b2825;
  border-color: #3f3c37;
}

.side-btn svg {
  width: 11px;
  height: 20px;
  color: #77736e;
}

.side-btn .list-ico {
  width: 32px;
  height: 28px;
}

.prop-row.tall {
  align-items: flex-start;
}

.prop-row.tall label {
  padding-top: 9px;
}

.field-btn {
  width: 308px;
  height: 56px;
  background: #3f3c37;
  border: 2px solid #55514c;
  border-radius: 4px;
  display: flex;
  align-items: center;
  justify-content: center;
  color: #c9c7c3;
  white-space: nowrap;
}

.prop-row.two-line {
  padding: 16px 0;
}

.prop-row.two-line label {
  margin: -8px 0;
}

.toggle {
  position: relative;
  width: 88px;
  height: 48px;
  background: #7a7570;
  border-radius: 16px;
}

.toggle::after {
  content: "";
  position: absolute;
  left: 4px;
  top: 4px;
  width: 40px;
  height: 40px;
  border-radius: 14px;
  background: #fcfbfa;
}

.toggle.on {
  background: #4a7d58;
}

.toggle.on::after {
  left: 44px;
}

.props-thumb {
  position: absolute;
  right: 0;
  top: 0;
  width: 16px;
  height: 277px;
  border-radius: 8px;
  background: #7a7570;
}
```
